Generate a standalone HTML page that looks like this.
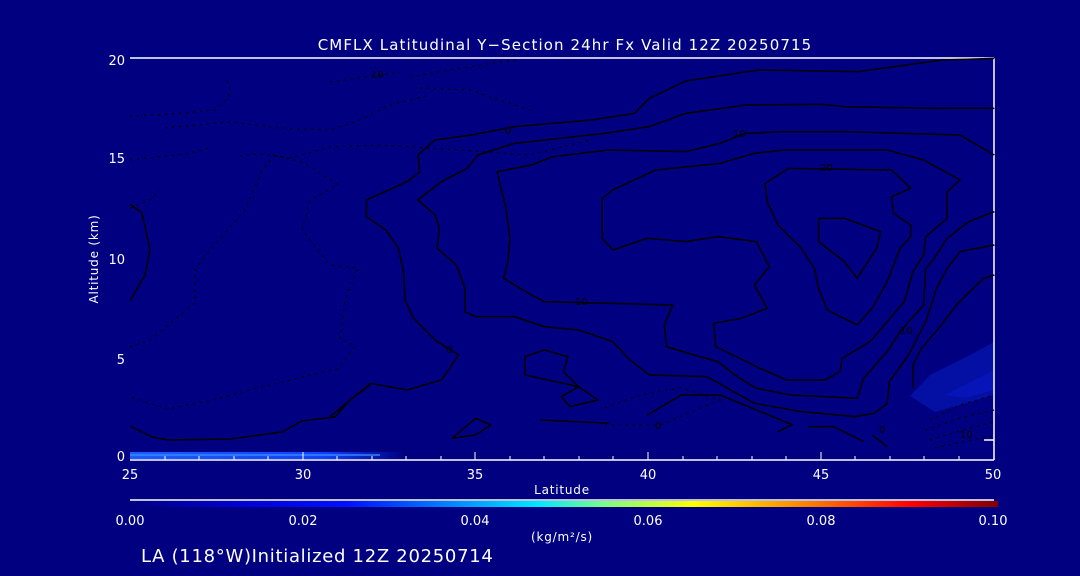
<!DOCTYPE html>
<html><head><meta charset="utf-8"><style>
html,body{margin:0;padding:0;background:#000080;width:1080px;height:576px;overflow:hidden}
svg{display:block}
text{font-family:"DejaVu Sans","Liberation Sans",sans-serif;fill:#fff}
</style></head><body>
<svg width="1080" height="576" viewBox="0 0 1080 576" xmlns="http://www.w3.org/2000/svg">
<defs>
<linearGradient id="cb" x1="0" x2="1" y1="0" y2="0">
<stop offset="0" stop-color="#000080"/>
<stop offset="0.12" stop-color="#0000d0"/>
<stop offset="0.25" stop-color="#0010ff"/>
<stop offset="0.38" stop-color="#0090ff"/>
<stop offset="0.47" stop-color="#00e8ff"/>
<stop offset="0.55" stop-color="#80ff80"/>
<stop offset="0.65" stop-color="#ffff00"/>
<stop offset="0.78" stop-color="#ff8000"/>
<stop offset="0.9" stop-color="#ff0000"/>
<stop offset="1" stop-color="#800000"/>
</linearGradient>
<linearGradient id="sf" x1="0" x2="1" y1="0" y2="0">
<stop offset="0" stop-color="#1a5cff"/>
<stop offset="0.7" stop-color="#1040ff"/>
<stop offset="1" stop-color="#000080"/>
</linearGradient>
</defs>
<rect width="1080" height="576" fill="#000080"/>
<rect x="130" y="452" width="275" height="7" fill="url(#sf)"/>
<rect x="130" y="454" width="250" height="2" fill="#3a8cff" opacity="0.7"/>
<polygon points="910,396 930,375 970,355 994,342 994,395 960,405 935,412" fill="#0410a4"/>
<polygon points="945,395 975,380 994,370 994,390 965,398" fill="#0614b8"/>
<g stroke="#fff" stroke-width="1.5" fill="none">
<line x1="130" y1="58" x2="994" y2="58"/>
<line x1="994" y1="58" x2="994" y2="460"/>
<line x1="130" y1="460" x2="994" y2="460"/>
<line x1="984" y1="440" x2="994" y2="440"/>
<line x1="130" y1="500" x2="994" y2="500"/>
</g>
<g stroke="#fff" stroke-width="1">
<line x1="165" y1="460" x2="165" y2="456"/><line x1="199" y1="460" x2="199" y2="456"/><line x1="234" y1="460" x2="234" y2="456"/><line x1="268" y1="460" x2="268" y2="456"/>
<line x1="303" y1="460" x2="303" y2="452"/>
<line x1="337" y1="460" x2="337" y2="456"/><line x1="372" y1="460" x2="372" y2="456"/><line x1="406" y1="460" x2="406" y2="456"/><line x1="441" y1="460" x2="441" y2="456"/>
<line x1="475" y1="460" x2="475" y2="452"/>
<line x1="510" y1="460" x2="510" y2="456"/><line x1="544" y1="460" x2="544" y2="456"/><line x1="579" y1="460" x2="579" y2="456"/><line x1="613" y1="460" x2="613" y2="456"/>
<line x1="648" y1="460" x2="648" y2="452"/>
<line x1="683" y1="460" x2="683" y2="456"/><line x1="717" y1="460" x2="717" y2="456"/><line x1="752" y1="460" x2="752" y2="456"/><line x1="786" y1="460" x2="786" y2="456"/>
<line x1="821" y1="460" x2="821" y2="452"/>
<line x1="855" y1="460" x2="855" y2="456"/><line x1="890" y1="460" x2="890" y2="456"/><line x1="924" y1="460" x2="924" y2="456"/><line x1="959" y1="460" x2="959" y2="456"/>
</g>
<rect x="130" y="501" width="868" height="6" fill="url(#cb)"/>
<g transform="translate(330,55) scale(0.4286,0.3333)" fill="none" stroke="#000" stroke-linejoin="round">
<polyline vector-effect="non-scaling-stroke" stroke-width="1.5" points="1550,10 1430,15 1230,50 1000,45 830,78 745,130 710,175 610,195 430,215 330,240 245,255 205,300 210,350 180,380 85,435 85,485 130,525 160,580 172,655 175,735 195,790 245,855 300,900 260,975 180,1005 95,985 0,1085"/>
<polyline vector-effect="non-scaling-stroke" stroke-width="1.5" points="1550,160 1420,160 1200,155 1150,148 970,150 830,175 745,215 640,235 430,265 345,300 320,340 260,380 205,435 245,480 255,520 250,580 295,630 315,700 315,770 340,785 430,785 500,815 580,825 660,860 700,915 745,960 880,965 990,1045 1100,1070 1225,1085 1270,1075 1300,1045 1305,980 1350,900 1390,800 1415,700 1440,640 1470,590 1550,570"/>
<polyline vector-effect="non-scaling-stroke" stroke-width="1.5" points="1550,300 1470,240 1190,230 1060,230 970,235 910,265 830,290 650,285 520,305 470,330 390,350 395,380 410,455 420,550 415,620 405,670 470,720 500,740 800,750 780,810 785,875 850,900 905,920 950,965 995,1000 1075,1020 1230,1030 1245,970 1300,890 1330,830 1385,750 1390,640 1410,610 1440,550 1490,500 1550,470"/>
<polygon vector-effect="non-scaling-stroke" stroke-width="1.5" points="635,430 660,405 760,345 910,325 990,295 1060,285 1300,285 1385,315 1470,375 1440,410 1440,490 1390,545 1385,600 1360,650 1340,740 1300,800 1260,860 1195,910 1190,950 1155,975 1065,975 995,935 900,875 895,805 960,790 1020,760 990,690 1025,635 995,560 905,545 830,560 740,550 660,585 635,550"/>
<polygon vector-effect="non-scaling-stroke" stroke-width="1.5" points="1015,385 1070,340 1310,345 1355,400 1310,425 1315,475 1355,510 1355,545 1330,580 1300,680 1265,760 1230,810 1160,765 1140,700 1130,640 1100,580 1045,510 1020,440"/>
<polygon vector-effect="non-scaling-stroke" stroke-width="1.5" points="1140,490 1200,490 1285,530 1275,580 1230,670 1200,620 1140,560"/>
<polyline vector-effect="non-scaling-stroke" stroke-width="1.5" points="1550,660 1525,670 1465,745 1420,820 1380,880 1360,930 1360,1000"/>
<polygon vector-effect="non-scaling-stroke" stroke-width="1.5" points="455,905 500,885 555,905 545,950 580,995 455,960"/>
<polygon vector-effect="non-scaling-stroke" stroke-width="1.5" points="540,1025 580,995 625,1035 560,1055"/>
<polygon vector-effect="non-scaling-stroke" stroke-width="1.5" points="285,1150 340,1090 375,1110 340,1140"/>
<polyline vector-effect="non-scaling-stroke" stroke-width="1.5" points="740,1080 820,1020 910,1020 1080,1110"/>
<polyline vector-effect="non-scaling-stroke" stroke-width="1.5" points="1045,1130 1080,1108"/>
<polyline vector-effect="non-scaling-stroke" stroke-width="1.5" points="490,1095 650,1105"/>
<polyline vector-effect="non-scaling-stroke" stroke-width="1.5" points="1115,1115 1175,1115 1245,1160"/>
<polyline vector-effect="non-scaling-stroke" stroke-width="1.5" points="1265,1140 1300,1175"/>
</g>
<g fill="none" stroke="#000" stroke-width="1.5" stroke-linejoin="round">
<polyline points="130,204 142,213 150,250 145,275 130,301"/>
<polyline points="130,426 152,437 168,440 230,439 282,432 302,421 335,417 350,400 370,385"/>
</g>
<g fill="none" stroke="#000" stroke-width="1.3" stroke-dasharray="2 5">
<polyline points="130,347 150,340 195,303 195,270 210,250 245,210 262,170 275,155 305,163 338,185 310,200 302,230 330,265 358,268 345,300 340,340 355,345 340,368 270,385 212,400 168,409 130,397"/>
<polyline points="130,116 160,115 215,110 228,98 230,89 227,81"/>
<polyline points="165,128 230,122 280,128 330,130 360,120 390,105 430,95"/>
<polyline points="130,208 150,200 160,190"/>
<polyline points="130,160 185,154 210,148"/>
<polyline points="240,156 260,154 290,158 330,147 380,145 460,150 530,155 590,140"/>
<polyline points="410,77 450,70 500,62 520,60"/>
<polyline points="420,88 470,90 500,100 530,110"/>
<polyline points="330,82 400,72"/>
<polyline points="605,408 640,395 680,388 720,400 660,425 605,425"/>
<polyline points="930,420 960,405 994,395"/>
<polyline points="925,430 960,418 994,410"/>
<polyline points="930,440 970,428 994,422"/>
<polyline points="935,448 980,438 994,436"/>
</g>
<g font-size="10">
<text x="371" y="78" style="fill:#000">10</text>
<text x="505" y="134" style="fill:#000">0</text>
<text x="733" y="137" style="fill:#000">10</text>
<text x="820" y="171" style="fill:#000">20</text>
<text x="575" y="305" style="fill:#000">10</text>
<text x="900" y="334" style="fill:#000">10</text>
<text x="446" y="353" style="fill:#000">0</text>
<text x="655" y="429" style="fill:#000">0</text>
<text x="879" y="433" style="fill:#000">0</text>
<text x="960" y="438" style="fill:#000">10</text>
</g>
<text x="565" y="50" font-size="15" text-anchor="middle" letter-spacing="1.1">CMFLX Latitudinal Y−Section 24hr  Fx Valid 12Z 20250715</text>
<g font-size="13" text-anchor="end">
<text x="125" y="65">20</text><text x="125" y="163">15</text><text x="125" y="264">10</text><text x="125" y="364">5</text><text x="125" y="461">0</text>
</g>
<text transform="translate(98,259) rotate(-90)" font-size="12" text-anchor="middle" letter-spacing="0.8">Altitude (km)</text>
<g font-size="13" text-anchor="middle">
<text x="130" y="479">25</text><text x="303" y="479">30</text><text x="475" y="479">35</text><text x="648" y="479">40</text><text x="821" y="479">45</text><text x="993" y="479">50</text>
</g>
<text x="562" y="494" font-size="12" text-anchor="middle" letter-spacing="0.8">Latitude</text>
<g font-size="13" text-anchor="middle">
<text x="130" y="525">0.00</text><text x="303" y="525">0.02</text><text x="475" y="525">0.04</text><text x="648" y="525">0.06</text><text x="821" y="525">0.08</text><text x="993" y="525">0.10</text>
</g>
<text x="562" y="541" font-size="12" text-anchor="middle" letter-spacing="0.8">(kg/m²/s)</text>
<text x="141" y="562" font-size="18" letter-spacing="0.7">LA (118°W)Initialized 12Z 20250714</text>
</svg>
</body></html>
